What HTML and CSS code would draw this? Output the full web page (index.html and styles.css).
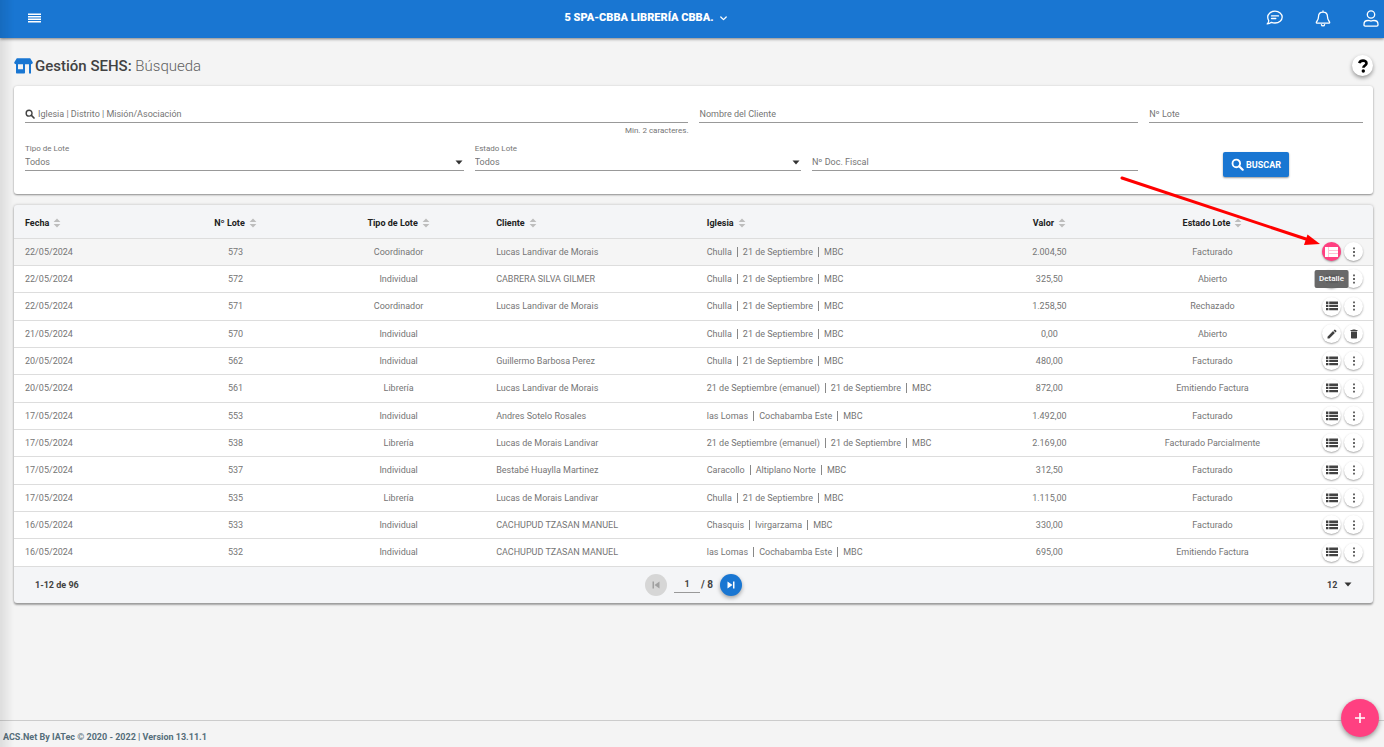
FILE: index.html
```html
<!DOCTYPE html>
<html lang="es">
<head>
<meta charset="utf-8">
<title>Gestión SEHS</title>
<link rel="stylesheet" href="styles.css">
</head>
<body>
<svg class="sprite" aria-hidden="true">
  <symbol id="list" viewBox="0 0 12 10"><path d="M0 0.5h2.4v2.4H0zM3.2 0.5H12v2.4H3.2zM0 3.7h2.4v2.4H0zM3.2 3.7H12v2.4H3.2zM0 6.9h2.4v2.4H0zM3.2 6.9H12v2.4H3.2z"/></symbol>
  <symbol id="dots" viewBox="0 0 12 10"><path d="M5.2 0.4h1.6v1.8H5.2zM5.2 4.1h1.6v1.8H5.2zM5.2 7.8h1.6v1.8H5.2z"/></symbol>
  <symbol id="sort" viewBox="0 0 8 10"><path d="M4 0.4L7.4 4H0.6zM4 9.6L0.6 6h6.8z"/></symbol>
  <symbol id="caret" viewBox="0 0 8 5"><path d="M0.5 0.5h7L4 4.5z"/></symbol>
  <symbol id="search" viewBox="0 0 12 12"><path fill="none" stroke="currentColor" stroke-width="1.7" d="M8.4 5a3.5 3.5 0 1 1-7 0a3.5 3.5 0 0 1 7 0z"/><path stroke="currentColor" stroke-width="2" stroke-linecap="round" d="M8 8l2.8 2.8"/></symbol>
</svg>

<header class="topbar">
  <button class="icon-btn" aria-label="Menú"><svg width="13" height="10" viewBox="0 0 13 10"><path d="M0 .5h13v1.6H0zM0 3h13v1.6H0zM0 5.5h13v1.6H0zM0 8h13v1.6H0z"/></svg></button>
  <button class="unit">5 SPA-CBBA LIBRERÍA CBBA.
    <svg width="7" height="5" viewBox="0 0 7 5"><path class="line" d="M.8 1l2.7 2.6L6.200 1"/></svg></button>
  <nav class="tools">
    <button class="icon-btn" aria-label="Mensajes"><svg width="17" height="16" viewBox="0 0 17 16"><path class="line" d="M9 1.200c4.100 0 7.200 2.600 7.200 5.900S13.100 13 9 13c-1.300 0-2.500-.2-3.500-.7-1.200 1-2.700 1.600-4.300 1.600.9-.9 1.500-2 1.600-3.100C2.100 9.800 1.700 8.500 1.700 7.100c0-3.300 3.200-5.900 7.300-5.900zM5.500 5.900h7M5.500 8.500h4.300"/></svg></button>
    <button class="icon-btn" aria-label="Notificaciones"><svg width="16" height="17" viewBox="0 0 16 17"><path class="line" d="M8 2.200c-2.800 0-4.500 2-4.500 4.600 0 3.800-2.200 4.500-2.200 5.700 0 .4.300.7.700.7h12c.4 0 .7-.3.7-.7 0-1.200-2.200-1.900-2.200-5.700C12.500 4.200 10.800 2.200 8 2.200zM8 .8v1.400M6.400 14.600c.2 1.700 3 1.700 3.200 0"/></svg></button>
    <button class="icon-btn" aria-label="Usuario"><svg width="16" height="17" viewBox="0 0 16 17"><path class="line" d="M11.700 4.500a3.700 3.700 0 1 1-7.400 0a3.700 3.700 0 0 1 7.400 0zM5 10.500c1.100 0 1.600.5 3 .5s1.900-.5 3-.5c2.300 0 4 1.500 4 3.700v.8c0 .7-.5 1.100-1.200 1.100H2.200c-.7 0-1.200-.4-1.200-1.100v-.8c0-2.200 1.700-3.700 4-3.700z"/></svg></button>
  </nav>
</header>

<main class="page">
  <div class="heading">
    <svg class="store" width="19" height="16" viewBox="0 0 19 16"><path d="M2.800.3h13.400l2.500 4c.4 1.200-.6 2-1.700 2H2C.9 6.300-.1 5.500.3 4.300zM2 6h2v5.200h5V6h2v8.500c0 .7-.4 1-1 1H3c-.6 0-1-.3-1-1zM15 6h2v9.500h-2z"/></svg>
    <h1>Gestión SEHS: <span>Búsqueda</span></h1>
    <button class="help" aria-label="Ayuda"><svg width="10" height="14" viewBox="0 0 10 14"><path class="q" d="M1.200 4.200C1.700 2.500 3 1.600 5 1.600c2 0 3.500 1 3.500 2.700 0 2.200-3.100 2.200-3.100 4.500"/><circle cx="5.300" cy="12" r="1.700"/></svg></button>
  </div>

  <form class="card filters">
    <div class="field w6">
      <div class="control"><svg width="10" height="10" viewBox="0 0 12 12"><use href="#search"/></svg><input type="text" aria-label="Iglesia, Distrito, Misión/Asociación" placeholder="Iglesia | Distrito | Misión/Asociación"></div>
      <small>Min. 2 caracteres.</small>
    </div>
    <div class="field w4"><div class="control"><input type="text" aria-label="Nombre del Cliente" placeholder="Nombre del Cliente"></div></div>
    <div class="field w2"><div class="control"><input type="text" aria-label="Nº Lote" placeholder="Nº Lote"></div></div>
    <div class="field w4"><label for="tipo">Tipo de Lote</label><div class="control pick"><select id="tipo"><option>Todos</option></select><svg width="8" height="5"><use href="#caret"/></svg></div></div>
    <div class="field w3"><label for="estado">Estado Lote</label><div class="control pick"><select id="estado"><option>Todos</option></select><svg width="8" height="5"><use href="#caret"/></svg></div></div>
    <div class="field w3 end"><div class="control"><input type="text" aria-label="Nº Doc. Fiscal" placeholder="Nº Doc. Fiscal"></div></div>
    <div class="w2 submit"><button type="button" class="primary"><svg width="13" height="13" viewBox="0 0 12 12"><use href="#search"/></svg>BUSCAR</button></div>
  </form>

  <section class="card results">
    <table>
      <colgroup><col class="c-date"><col class="c-mid"><col class="c-mid"><col class="c-client"><col><col class="c-mid"><col class="c-mid"><col class="c-act"></colgroup>
      <thead><tr>
        <th><button>Fecha<svg width="8" height="10"><use href="#sort"/></svg></button></th>
        <th class="mid"><button>Nº Lote<svg width="8" height="10"><use href="#sort"/></svg></button></th>
        <th class="mid"><button>Tipo de Lote<svg width="8" height="10"><use href="#sort"/></svg></button></th>
        <th class="wide"><button>Cliente<svg width="8" height="10"><use href="#sort"/></svg></button></th>
        <th class="wide"><button>Iglesia<svg width="8" height="10"><use href="#sort"/></svg></button></th>
        <th class="mid"><button>Valor<svg width="8" height="10"><use href="#sort"/></svg></button></th>
        <th class="mid"><button>Estado Lote<svg width="8" height="10"><use href="#sort"/></svg></button></th>
        <th></th>
      </tr></thead>
      <tbody>
        <tr class="hover"><td>22/05/2024</td><td class="mid">573</td><td class="mid">Coordinador</td><td class="wide">Lucas Landivar de Morais</td><td class="wide path"><span>Chulla</span><span>21 de Septiembre</span><span>MBC</span></td><td class="mid">2.004,50</td><td class="mid">Facturado</td><td><div class="acts"><button class="round active" aria-label="Ver"><svg width="13" height="12" viewBox="0 0 13 12"><path d="M0 1h13v10H0z"/><path class="cut" d="M3.500 1v10M3.500 4.500h9.500M3.500 7.500h9.500"/></svg><span class="tip" role="tooltip">Detalle</span></button><button class="round" aria-label="Más"><svg width="12" height="10"><use href="#dots"/></svg></button></div></td></tr>
        <tr><td>22/05/2024</td><td class="mid">572</td><td class="mid">Individual</td><td class="wide">CABRERA SILVA GILMER</td><td class="wide path"><span>Chulla</span><span>21 de Septiembre</span><span>MBC</span></td><td class="mid">325,50</td><td class="mid">Abierto</td><td><div class="acts"><button class="round" aria-label="Detalle"><svg width="12" height="10"><use href="#list"/></svg></button><button class="round" aria-label="Más"><svg width="12" height="10"><use href="#dots"/></svg></button></div></td></tr>
        <tr><td>22/05/2024</td><td class="mid">571</td><td class="mid">Coordinador</td><td class="wide">Lucas Landivar de Morais</td><td class="wide path"><span>Chulla</span><span>21 de Septiembre</span><span>MBC</span></td><td class="mid">1.258,50</td><td class="mid">Rechazado</td><td><div class="acts"><button class="round" aria-label="Detalle"><svg width="12" height="10"><use href="#list"/></svg></button><button class="round" aria-label="Más"><svg width="12" height="10"><use href="#dots"/></svg></button></div></td></tr>
        <tr><td>21/05/2024</td><td class="mid">570</td><td class="mid">Individual</td><td class="wide"></td><td class="wide path"><span>Chulla</span><span>21 de Septiembre</span><span>MBC</span></td><td class="mid">0,00</td><td class="mid">Abierto</td><td><div class="acts"><button class="round" aria-label="Editar"><svg width="12" height="12" viewBox="0 0 24 24"><path d="M3 17.250V21h3.750L17.810 9.940l-3.750-3.750zM20.710 7.040a1 1 0 0 0 0-1.410l-2.340-2.340a1 1 0 0 0-1.410 0l-1.830 1.830 3.750 3.750z"/></svg></button><button class="round" aria-label="Eliminar"><svg width="12" height="12" viewBox="0 0 24 24"><path d="M6 19c0 1.100.9 2 2 2h8c1.100 0 2-.9 2-2V7H6zM19 4h-3.500l-1-1h-5l-1 1H5v2h14z"/></svg></button></div></td></tr>
        <tr><td>20/05/2024</td><td class="mid">562</td><td class="mid">Individual</td><td class="wide">Guillermo Barbosa Perez</td><td class="wide path"><span>Chulla</span><span>21 de Septiembre</span><span>MBC</span></td><td class="mid">480,00</td><td class="mid">Facturado</td><td><div class="acts"><button class="round" aria-label="Detalle"><svg width="12" height="10"><use href="#list"/></svg></button><button class="round" aria-label="Más"><svg width="12" height="10"><use href="#dots"/></svg></button></div></td></tr>
        <tr><td>20/05/2024</td><td class="mid">561</td><td class="mid">Librería</td><td class="wide">Lucas Landivar de Morais</td><td class="wide path"><span>21 de Septiembre (emanuel)</span><span>21 de Septiembre</span><span>MBC</span></td><td class="mid">872,00</td><td class="mid">Emitiendo Factura</td><td><div class="acts"><button class="round" aria-label="Detalle"><svg width="12" height="10"><use href="#list"/></svg></button><button class="round" aria-label="Más"><svg width="12" height="10"><use href="#dots"/></svg></button></div></td></tr>
        <tr><td>17/05/2024</td><td class="mid">553</td><td class="mid">Individual</td><td class="wide">Andres Sotelo Rosales</td><td class="wide path"><span>las Lomas</span><span>Cochabamba Este</span><span>MBC</span></td><td class="mid">1.492,00</td><td class="mid">Facturado</td><td><div class="acts"><button class="round" aria-label="Detalle"><svg width="12" height="10"><use href="#list"/></svg></button><button class="round" aria-label="Más"><svg width="12" height="10"><use href="#dots"/></svg></button></div></td></tr>
        <tr><td>17/05/2024</td><td class="mid">538</td><td class="mid">Librería</td><td class="wide">Lucas de Morais Landivar</td><td class="wide path"><span>21 de Septiembre (emanuel)</span><span>21 de Septiembre</span><span>MBC</span></td><td class="mid">2.169,00</td><td class="mid">Facturado Parcialmente</td><td><div class="acts"><button class="round" aria-label="Detalle"><svg width="12" height="10"><use href="#list"/></svg></button><button class="round" aria-label="Más"><svg width="12" height="10"><use href="#dots"/></svg></button></div></td></tr>
        <tr><td>17/05/2024</td><td class="mid">537</td><td class="mid">Individual</td><td class="wide">Bestabé Huaylla Martinez</td><td class="wide path"><span>Caracollo</span><span>Altiplano Norte</span><span>MBC</span></td><td class="mid">312,50</td><td class="mid">Facturado</td><td><div class="acts"><button class="round" aria-label="Detalle"><svg width="12" height="10"><use href="#list"/></svg></button><button class="round" aria-label="Más"><svg width="12" height="10"><use href="#dots"/></svg></button></div></td></tr>
        <tr><td>17/05/2024</td><td class="mid">535</td><td class="mid">Librería</td><td class="wide">Lucas de Morais Landivar</td><td class="wide path"><span>Chulla</span><span>21 de Septiembre</span><span>MBC</span></td><td class="mid">1.115,00</td><td class="mid">Facturado</td><td><div class="acts"><button class="round" aria-label="Detalle"><svg width="12" height="10"><use href="#list"/></svg></button><button class="round" aria-label="Más"><svg width="12" height="10"><use href="#dots"/></svg></button></div></td></tr>
        <tr><td>16/05/2024</td><td class="mid">533</td><td class="mid">Individual</td><td class="wide">CACHUPUD TZASAN MANUEL</td><td class="wide path"><span>Chasquis</span><span>Ivirgarzama</span><span>MBC</span></td><td class="mid">330,00</td><td class="mid">Facturado</td><td><div class="acts"><button class="round" aria-label="Detalle"><svg width="12" height="10"><use href="#list"/></svg></button><button class="round" aria-label="Más"><svg width="12" height="10"><use href="#dots"/></svg></button></div></td></tr>
        <tr><td>16/05/2024</td><td class="mid">532</td><td class="mid">Individual</td><td class="wide">CACHUPUD TZASAN MANUEL</td><td class="wide path"><span>las Lomas</span><span>Cochabamba Este</span><span>MBC</span></td><td class="mid">695,00</td><td class="mid">Emitiendo Factura</td><td><div class="acts"><button class="round" aria-label="Detalle"><svg width="12" height="10"><use href="#list"/></svg></button><button class="round" aria-label="Más"><svg width="12" height="10"><use href="#dots"/></svg></button></div></td></tr>
      </tbody>
    </table>
    <div class="pager">
      <span>1-12 de 96</span>
      <div class="pages">
        <button class="jump" disabled aria-label="Primera página"><svg width="8" height="8" viewBox="0 0 8 8"><path d="M.5.5H2v7H.5zM7.500.5v7L2.500 4z"/></svg></button>
        <input type="text" value="1" aria-label="Página"><span>/ 8</span>
        <button class="jump next" aria-label="Última página"><svg width="8" height="8" viewBox="0 0 8 8"><path d="M6 .5h1.500v7H6zM.5.5v7l5-3.500z"/></svg></button>
      </div>
      <div class="pick size"><select aria-label="Filas por página"><option>12</option></select><svg width="8" height="5"><use href="#caret"/></svg></div>
    </div>
    <svg class="pointer" width="202" height="72" viewBox="0 0 202 72"><path d="M2 2L186 63" stroke="#f00" stroke-width="3" stroke-linecap="round"/><path fill="#f00" d="M200 68L184 69L187.500 58.500z"/></svg>
  </section>
</main>

<footer class="footer">ACS.Net By IATec © 2020 - 2022 | Version 13.11.1</footer>
<button class="fab" aria-label="Agregar"><svg width="10" height="10" viewBox="0 0 10 10"><path d="M4.200 0h1.600v4.200H10v1.600H5.800V10H4.200V5.800H0V4.200h4.200z"/></svg></button>
<div class="edge"></div>
</body>
</html>
```
FILE: styles.css
```css
* { box-sizing: border-box; }
body {
  margin: 0;
  min-height: 100vh;
  display: flex;
  flex-direction: column;
  background: #f4f4f4;
  color: #757575;
  font: 9px/14px Roboto, sans-serif;
}
button, input, select {
  font: inherit;
  color: inherit;
  border: 0;
  padding: 0;
  margin: 0;
  background: none;
  outline: 0;
}
svg { fill: currentColor; flex: none; display: block; }
.sprite { position: absolute; width: 0; height: 0; }
.line { fill: none; stroke: currentColor; stroke-width: 1.3; stroke-linecap: round; stroke-linejoin: round; }

.topbar {
  display: grid;
  grid-template-columns: 1fr auto 1fr;
  align-items: center;
  height: 38px;
  padding: 0 5px 2px 28px;
  background: #1976d2;
  color: #fff;
  box-shadow: 0 1px 3px rgba(0, 0, 0, .5);
}
.icon-btn { justify-self: start; }
.unit {
  display: flex;
  align-items: center;
  gap: 6px;
  margin-right: 116px;
  font-size: 11px;
  font-weight: 900;
}
.tools { display: flex; justify-content: flex-end; gap: 32px; }

.page { flex: 1; padding: 14px 11px 0 14px; }
.heading { display: flex; align-items: center; height: 27px; gap: 2px; }
.store { color: #1976d2; }
h1 { flex: 1; margin: 0; font-size: 15px; line-height: 20px; font-weight: 500; color: #424242; }
h1 span { font-weight: 300; color: #616161; }
.help {
  display: grid;
  place-items: center;
  width: 21px;
  height: 21px;
  border-radius: 50%;
  background: #fff;
  color: #000;
  box-shadow: 0 2px 4px rgba(0, 0, 0, .4);
}
.q { fill: none; stroke: #000; stroke-width: 2.600; }

.card {
  border-radius: 3px;
  background: #fff;
  box-shadow: 0 1px 2px rgba(0, 0, 0, .4), 0 0 3px rgba(0, 0, 0, .1);
}
.filters {
  display: grid;
  grid-template-columns: repeat(12, 1fr);
  gap: 5px 11px;
  margin: 7px 0 11px;
  padding: 20px 10px 17px 11px;
}
.w6 { grid-column: span 6; }
.w4 { grid-column: span 4; }
.w3 { grid-column: span 3; }
.w2 { grid-column: span 2; }
.field { display: flex; flex-direction: column; }
.field label { font-size: 8px; line-height: 12px; margin-bottom: -1px; }
.field small { align-self: flex-end; font-size: 8px; line-height: 15px; }
.control {
  display: flex;
  align-items: center;
  gap: 3px;
  height: 17px;
  border-bottom: 1px solid #999;
}
.control svg { color: #424242; }
.control input { flex: 1; min-width: 0; }
.end { padding-top: 11px; }
::placeholder { color: #757575; opacity: 1; }
.pick { display: flex; align-items: center; }
.pick select { flex: 1; min-width: 0; appearance: none; }
.pick svg { color: #333; }
.control.pick { padding-right: 1px; }
.submit { display: flex; justify-content: center; align-items: flex-start; padding-top: 9px; }
.primary {
  display: flex;
  align-items: center;
  gap: 2px;
  height: 25px;
  padding: 0 8px;
  border-radius: 2px;
  background: #1976d2;
  color: #fff;
  font-weight: 700;
  box-shadow: 0 1px 2px rgba(0, 0, 0, .4);
}

.results {
  position: relative;
  background: #f4f5f7;
  box-shadow: 0 2px 2px rgba(0, 0, 0, .3), 0 0 3px rgba(0, 0, 0, .25);
}
table { width: 100%; table-layout: fixed; border-collapse: collapse; }
.c-date { width: 10.3%; }
.c-mid { width: 12%; }
.c-client { width: 15.5%; }
.c-act { width: 79px; }
th, td { padding: 0 0 0 11px; text-align: left; white-space: nowrap; }
th { padding-top: 2px; height: 33px; border-bottom: 1px solid #ddd; color: #212121; font-weight: 700; }
th button { display: inline-flex; align-items: center; gap: 4px; vertical-align: middle; }
th svg { color: #bdbdbd; }
td { height: 27px; border-bottom: 1px solid #ddd; background: #fff; }
tr:nth-child(3n) td { height: 28px; }
.hover td { background: #f5f5f5; }
.mid { padding-left: 0; text-align: center; }
.wide { padding-left: 16px; }
.path span + span { margin-left: 5px; padding-left: 5px; border-left: 1px solid #888; }
.acts { display: flex; justify-content: flex-end; gap: 3px; padding-right: 10px; }
.round {
  position: relative;
  display: grid;
  place-items: center;
  width: 19px;
  height: 19px;
  border-radius: 50%;
  background: #fff;
  color: #424242;
  box-shadow: 0 1px 2px rgba(0, 0, 0, .35);
}
.active { background: #ff4081; color: #fff; }
.cut { fill: none; stroke: #ffc2d6; stroke-width: 1; }
.tip {
  position: absolute;
  z-index: 1;
  top: 28px;
  left: 50%;
  transform: translateX(-50%);
  padding: 0 5px;
  border-radius: 2px;
  background: rgba(97, 97, 97, .95);
  color: #fff;
  font-size: 8px;
  line-height: 18px;
  font-weight: 500;
}

.pager {
  display: grid;
  grid-template-columns: 1fr auto 1fr;
  align-items: center;
  height: 36px;
  padding: 0 21px 0 21px;
  color: #424242;
  font-weight: 700;
}
.pages { display: flex; align-items: center; gap: 7px; }
.pages input { width: 26px; height: 17px; text-align: center; border-bottom: 1px solid #999; }
.pages span { margin-left: -6px; font-size: 10px; }
.jump {
  display: grid;
  place-items: center;
  width: 22px;
  height: 22px;
  border-radius: 50%;
  background: #d6d6d6;
  color: #a0a0a0;
}
.next { background: #1976d2; color: #fff; box-shadow: 0 2px 4px rgba(0, 0, 0, .35); }
.size { justify-self: end; gap: 6px; }
.pointer { position: absolute; top: -29px; right: 51px; fill: none; pointer-events: none; }

.footer {
  height: 27px;
  padding: 9px 3px 0;
  border-top: 1px solid #ccc;
  color: #546e7a;
  font-weight: 700;
}
.fab {
  position: fixed;
  right: 5px;
  bottom: 10px;
  display: grid;
  place-items: center;
  width: 38px;
  height: 38px;
  border-radius: 50%;
  background: #ff4081;
  color: #fff;
  box-shadow: 0 2px 5px rgba(0, 0, 0, .4);
}
.edge {
  position: fixed;
  inset: 0 auto 0 0;
  width: 14px;
  background: linear-gradient(to right, rgba(0, 0, 0, .09), transparent);
  pointer-events: none;
}
```
